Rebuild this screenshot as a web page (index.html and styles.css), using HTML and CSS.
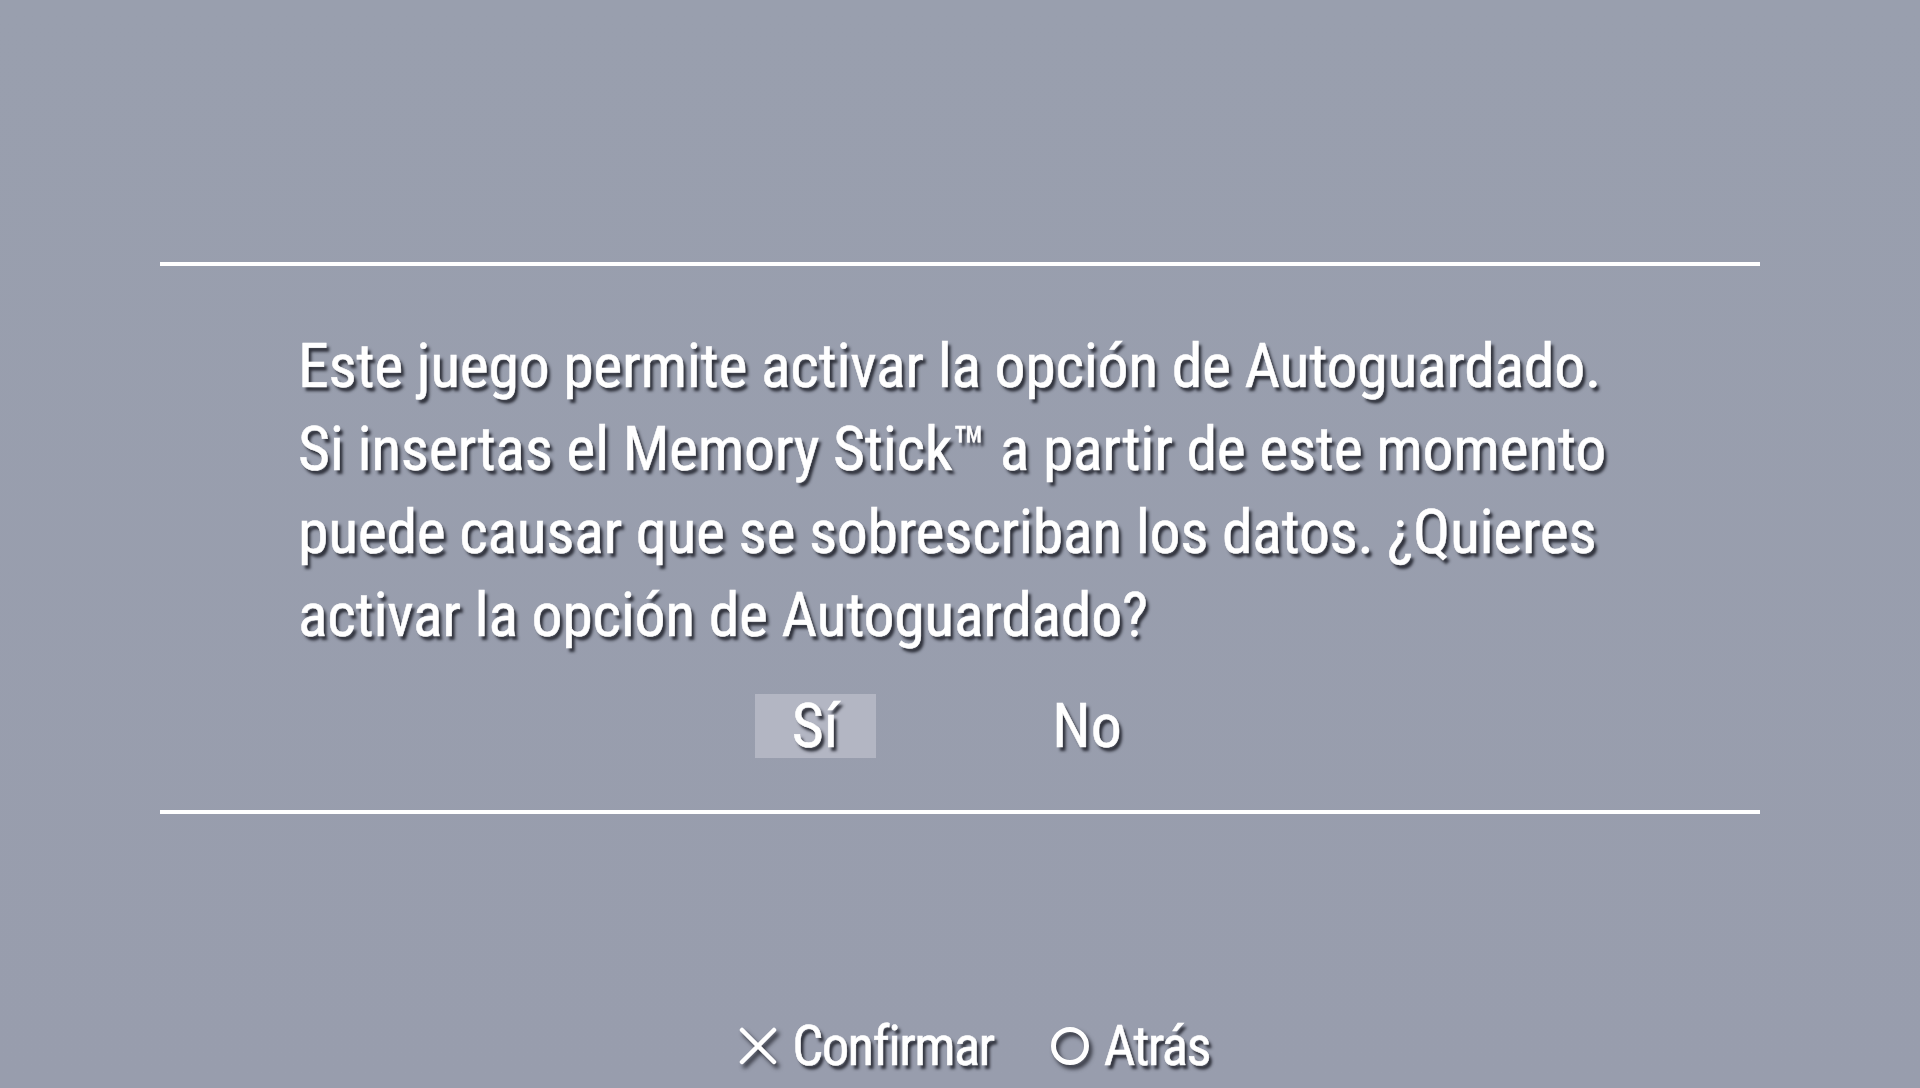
FILE: index.html
```html
<!DOCTYPE html>
<html lang="es">
<head>
<meta charset="utf-8">
<title>Autoguardado</title>
<link rel="stylesheet" href="styles.css">
</head>
<body>
<div class="screen">
  <div class="dialog">
    <div class="message">
      <span class="line">Este juego permite activar la opción de Autoguardado.</span>
      <span class="line">Si insertas el Memory Stick™ a partir de este momento</span>
      <span class="line">puede causar que se sobrescriban los datos. ¿Quieres</span>
      <span class="line">activar la opción de Autoguardado?</span>
    </div>
    <div class="choices">
      <div class="choice selected"><span class="label">Sí</span></div>
      <div class="choice"><span class="label">No</span></div>
    </div>
  </div>
  <div class="footer">
    <div class="hint">
      <svg class="icon" viewBox="0 0 40 40" width="40" height="40">
        <path d="M4 4 L36 36 M36 4 L4 36" stroke="#fff" stroke-width="4.5" stroke-linecap="round" fill="none"/>
      </svg>
      <span class="label">Confirmar</span>
    </div>
    <div class="hint">
      <svg class="icon" viewBox="0 0 40 40" width="40" height="40">
        <circle cx="20" cy="20" r="16.5" stroke="#fff" stroke-width="5" fill="none"/>
      </svg>
      <span class="label">Atrás</span>
    </div>
  </div>
</div>
</body>
</html>
```

FILE: styles.css
```css
html, body {
  margin: 0;
  padding: 0;
}
body {
  background: #989eae;
  font-family: "Roboto Condensed", Roboto, "Noto Sans", sans-serif;
  color: #ffffff;
}
.screen {
  width: 1920px;
  height: 1088px;
  display: flex;
  flex-direction: column;
  background: linear-gradient(180deg, #999fae 0%, #989dad 100%);
}
.dialog {
  margin: 262px 160px 0 160px;
  border-top: 4px solid #ffffff;
  border-bottom: 4px solid #ffffff;
  padding: 58px 0 52px 0;
}
.message {
  padding-left: 138px;
  font-size: 62px;
  line-height: 83px;
  letter-spacing: -0.4px;
}
.line {
  display: block;
  white-space: nowrap;
  -webkit-text-stroke: 0.5px #ffffff;
  text-shadow: 3px 4px 3px rgba(40, 42, 52, 0.95);
}
.choices {
  display: flex;
  justify-content: center;
  gap: 151px;
  margin-top: 38px;
  padding-right: 18px;
}
.choice {
  width: 121px;
  height: 64px;
  display: flex;
  justify-content: center;
  align-items: center;
  font-size: 62px;
  line-height: 64px;
}
.choice.selected {
  background: #b3b6c3;
}
.label {
  display: inline-block;
  -webkit-text-stroke: 0.5px #ffffff;
  text-shadow: 3px 4px 3px rgba(40, 42, 52, 0.95);
}
.footer {
  margin-top: auto;
  height: 72px;
  display: flex;
  justify-content: center;
  align-items: flex-start;
  gap: 56px;
  padding-left: 28px;
}
.hint {
  display: flex;
  align-items: center;
  gap: 14px;
  font-size: 55px;
  line-height: 60px;
  letter-spacing: -1.7px;
}
.icon {
  filter: drop-shadow(3px 4px 2px rgba(40, 42, 52, 0.95));
}
```
